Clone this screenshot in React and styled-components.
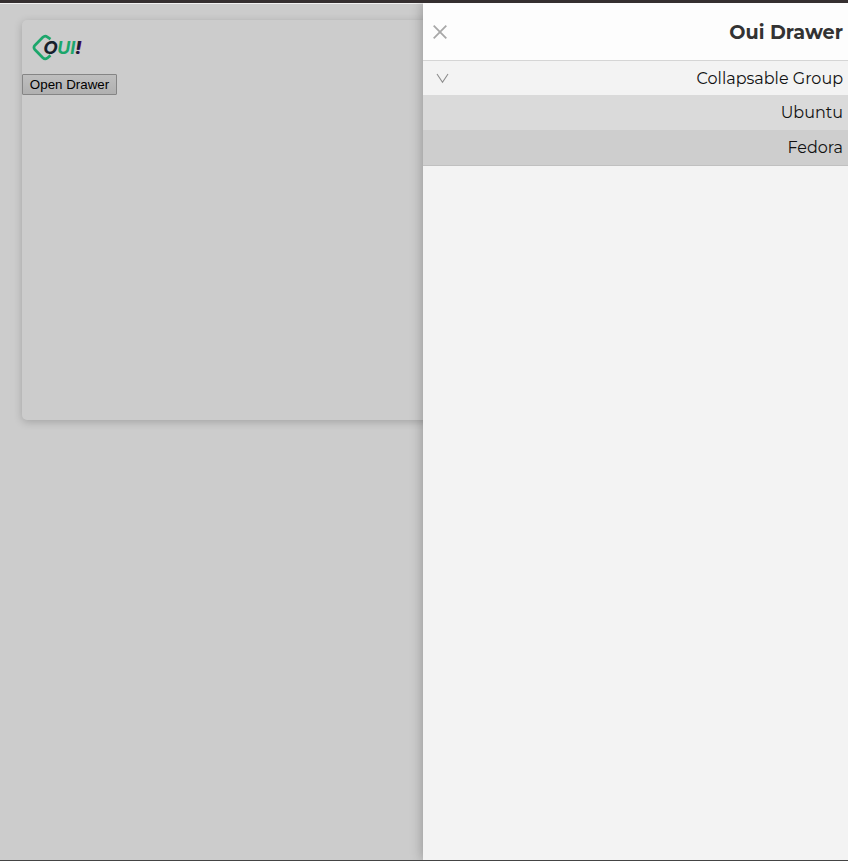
import React from 'react';
import styled, { createGlobalStyle } from 'styled-components';

const GlobalStyle = createGlobalStyle`
  * { box-sizing: border-box; }
  body { margin: 0; overflow: hidden; }
`;

const Screen = styled.div`
  height: 861px;
  width: 848px;
  display: grid;
  grid-template-columns: 423px 425px;
  border-top: 3px solid #352f30;
  border-bottom: 1px solid #444;
  background: #cccccc;
  overflow: hidden;
  font-family: Montserrat, Inter, sans-serif;
`;

const Page = styled.main`
  min-width: 0;
  padding: 16px 0 0 22px;
  border-top: 1px solid #f1f1f1;
`;

const Card = styled.section`
  width: 460px;
  height: 400px;
  display: flex;
  flex-direction: column;
  align-items: flex-start;
  border-radius: 5px;
  background: #cccccc;
  box-shadow: 0 2px 8px rgba(0, 0, 0, 0.2);
`;

const Logo = styled.svg`
  display: block;
  width: 52px;
  height: 28px;
  margin: 14px 0 12px 10px;
`;

const Mark = styled.text`
  font: italic 700 18px Inter, sans-serif;
  fill: ${(p) => p.$color};
`;

const OpenButton = styled.button`
  width: 95px;
  height: 21px;
  padding: 0;
  border: 1px solid #858585;
  border-radius: 1px;
  background: linear-gradient(#bfbfbf, #b0b0b0);
  color: #000;
  font: 13.333px/19px 'Liberation Sans', sans-serif;
  text-align: center;
`;

const Drawer = styled.aside`
  position: relative;
  display: flex;
  flex-direction: column;
  background: #f3f3f3;
  box-shadow: 0 0 12px rgba(0, 0, 0, 0.3);
`;

const Header = styled.header`
  height: 58px;
  display: flex;
  align-items: center;
  justify-content: space-between;
  padding: 1px 5px 0 10px;
  border-bottom: 1px solid #d5d5d5;
  background: #fdfdfd;
`;

const Title = styled.h1`
  margin: 0;
  color: #333;
  font-size: 19.2px;
  font-weight: 700;
  line-height: 24px;
  white-space: nowrap;
`;

const Row = styled.div`
  height: ${(p) => p.$height}px;
  display: flex;
  align-items: center;
  justify-content: ${(p) => (p.$group ? 'space-between' : 'flex-end')};
  padding: ${(p) => (p.$group ? 1 : 0)}px 5px 0 13px;
  border-bottom: ${(p) => (p.$last ? '1px solid #c0c0c0' : '0')};
  background: ${(p) => p.$bg};
`;

const Label = styled.span`
  color: #111;
  font-size: 16px;
  line-height: 20px;
  white-space: nowrap;
`;

const Icon = styled.svg`
  display: block;
  fill: none;
  stroke: ${(p) => p.$color};
`;

export default function App() {
  return (
    <>
      <GlobalStyle />
      <Screen>
        <Page>
          <Card>
            <Logo viewBox="0 0 52 28" aria-label="OUI!">
              <path
                d="M18.5 5.2 15.2 2.8Q13 1.3 10.8 3.3L3 11.2Q.9 13.5 3 15.8L10.8 23.8Q13 25.8 15.2 24.2L18.5 21.4"
                fill="none"
                stroke="#1ca66b"
                strokeWidth="2.7"
              />
              <Mark x="11.2" y="19.7" textLength="14.5" lengthAdjust="spacingAndGlyphs" $color="#17202c">O</Mark>
              <Mark x="25.3" y="19.7" textLength="18" lengthAdjust="spacingAndGlyphs" $color="#1ca66b">UI</Mark>
              <Mark x="43.7" y="19.7" $color="#780d78">!</Mark>
              <Mark x="42.9" y="19.7" $color="#17202c">!</Mark>
            </Logo>
            <OpenButton>Open Drawer</OpenButton>
          </Card>
        </Page>
        <Drawer>
          <Header>
            <Icon width="14" height="14" viewBox="0 0 14 14" $color="#a8a8a8" strokeWidth="1.8">
              <path d="M.7 .7 13.3 13.3M13.3 .7 .7 13.3" />
            </Icon>
            <Title>Oui Drawer</Title>
          </Header>
          <Row $group $height={34} $bg="#f3f3f3">
            <Icon width="13" height="11" viewBox="0 0 13 11" $color="#8c8c8c" strokeWidth="1.1">
              <path d="M1 1 6.5 9.3 12 1" />
            </Icon>
            <Label>Collapsable Group</Label>
          </Row>
          <Row $height={35} $bg="#dadada"><Label>Ubuntu</Label></Row>
          <Row $height={36} $bg="#cecece" $last><Label>Fedora</Label></Row>
        </Drawer>
      </Screen>
    </>
  );
}
